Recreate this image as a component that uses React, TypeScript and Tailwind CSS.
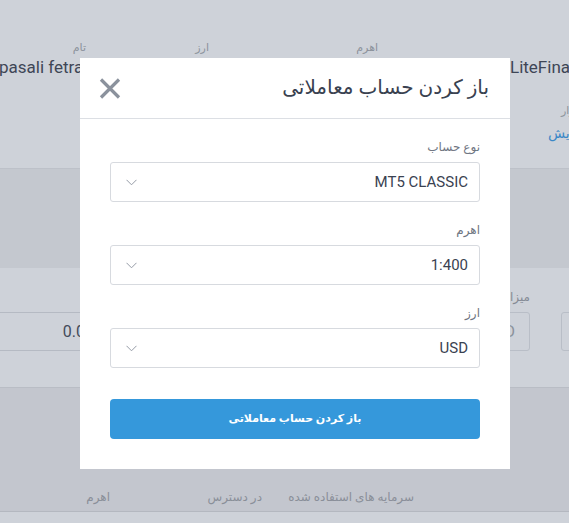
import React from "react";

const FONT = "font-['Roboto','DejaVu_Sans',sans-serif]";

function Chevron() {
  return (
    <svg width="11" height="7" viewBox="0 0 11 7" fill="none">
      <polyline points="0.5,0.8 5.5,5.8 10.5,0.8" stroke="#959ba6" strokeWidth="1" />
    </svg>
  );
}

function CloseIcon() {
  return (
    <svg width="22" height="21" viewBox="0 0 22 21" fill="none">
      <path d="M2 1.5 L20 19.5 M20 1.5 L2 19.5" stroke="#8b929d" strokeWidth="3.2" strokeLinecap="butt" />
    </svg>
  );
}

function SelectField({ label, value }: { label: string; value: string }) {
  return (
    <div className="flex flex-col">
      <span dir="rtl" className="text-right text-[12px] leading-[16px] text-[#6f7682]">
        {label}
      </span>
      <div className="mt-[7px] flex h-[40px] items-center justify-between rounded-[3px] border border-[#d7dadf] bg-white pl-[15px] pr-[11px]">
        <Chevron />
        <span className="text-[15px] text-[#3a4251]">{value}</span>
      </div>
    </div>
  );
}

function Modal() {
  return (
    <div className="absolute left-[80px] top-[58px] w-[430px] bg-white">
      <div className="flex h-[61px] items-center justify-between border-b border-[#dcdfe4] pl-[19px] pr-[21px]">
        <CloseIcon />
        <h2 dir="rtl" className="pb-[2px] text-[20px] font-normal text-[#394150]">
          باز کردن حساب معاملاتی
        </h2>
      </div>
      <div className="flex flex-col gap-[20px] px-[30px] pb-[30px] pt-[20px]">
        <SelectField label="نوع حساب" value="MT5 CLASSIC" />
        <SelectField label="اهرم" value="1:400" />
        <SelectField label="ارز" value="USD" />
        <button
          dir="rtl"
          className="mt-[11px] h-[40px] w-full rounded-[4px] bg-[#3598db] text-[11px] font-bold text-white"
        >
          باز کردن حساب معاملاتی
        </button>
      </div>
    </div>
  );
}

function Background() {
  return (
    <div className="flex flex-col">
      {/* account header */}
      <div className="h-[169px] overflow-hidden border-b border-[#bdc1c9] bg-[#ced2d9]">
        <div className="flex pt-[40px]">
          <div className="flex w-[86px] shrink-0 flex-col">
            <span className="text-right text-[11px] leading-[15px] text-[#8c929c]">تام</span>
            <span className="-ml-[1px] whitespace-nowrap text-[17px] leading-[24px] text-[#3e4656]">
              pasali fetrati
            </span>
          </div>
          <div className="flex w-[123px] shrink-0 flex-col">
            <span className="text-right text-[11px] leading-[15px] text-[#8c929c]">ارز</span>
          </div>
          <div className="flex w-[169px] shrink-0 flex-col">
            <span className="text-right text-[11px] leading-[15px] text-[#8c929c]">اهرم</span>
          </div>
          <div className="ml-[132px] flex shrink-0 flex-col">
            <span className="h-[15px]" />
            <span className="whitespace-nowrap text-[17px] leading-[24px] text-[#3e4656]">
              LiteFinance
            </span>
          </div>
        </div>
        <div className="flex justify-end pt-[24px]">
          <div dir="rtl" className="-mr-[60px] flex w-[81px] shrink-0 flex-col items-end">
            <span className="ml-[13px] text-[11px] leading-[15px] text-[#8c929c]">بازار</span>
            <span className="mt-[5px] text-[14px] leading-[20px] text-[#3b88c7]">نمایش</span>
          </div>
        </div>
      </div>

      {/* dark band */}
      <div className="h-[99px] bg-[#c4c8cf]" />

      {/* inputs row */}
      <div className="h-[120px] overflow-hidden border-b border-[#b9bdc5] bg-[#ced2d9]">
        <div className="flex items-start">
          <div className="-ml-[20px] mt-[44px] flex h-[39px] w-[125px] shrink-0 items-center justify-end border border-[#b5bac3] pr-[10px]">
            <span className="text-[16px] text-[#434b5a]">0.00</span>
          </div>
          <div className="ml-[355px] flex shrink-0 flex-col items-end">
            <span dir="rtl" className="mt-[21px] h-[16px] text-[12px] leading-[16px] text-[#858b95]">
              میزان
            </span>
            <div className="mt-[7px] flex h-[39px] w-[70px] items-center justify-end rounded-[3px] border border-[#b9bec7] pr-[14px]">
              <span className="text-[16px] text-[#8c929c]">USD</span>
            </div>
          </div>
          <div className="ml-[31px] mt-[44px] h-[39px] w-[70px] shrink-0 rounded-[3px] border border-[#b9bec7]" />
        </div>
      </div>

      {/* summary band */}
      <div className="h-[124px] border-b border-[#b4b8c0] bg-[#c3c6ce]">
        <div dir="rtl" className="flex pr-[155px] pt-[101px] text-[12px] leading-[16px] text-[#8a8f99]">
          <span className="w-[152px] shrink-0 text-right">سرمایه های استفاده شده</span>
          <span className="w-[152px] shrink-0 text-right">در دسترس</span>
          <span className="shrink-0 text-right">اهرم</span>
        </div>
      </div>
      <div className="h-[20px] bg-[#ced2d9]" />
    </div>
  );
}

export default function App() {
  return (
    <div className={`relative h-[523px] w-[569px] overflow-hidden bg-[#ced2d9] ${FONT}`}>
      <Background />
      <Modal />
    </div>
  );
}
